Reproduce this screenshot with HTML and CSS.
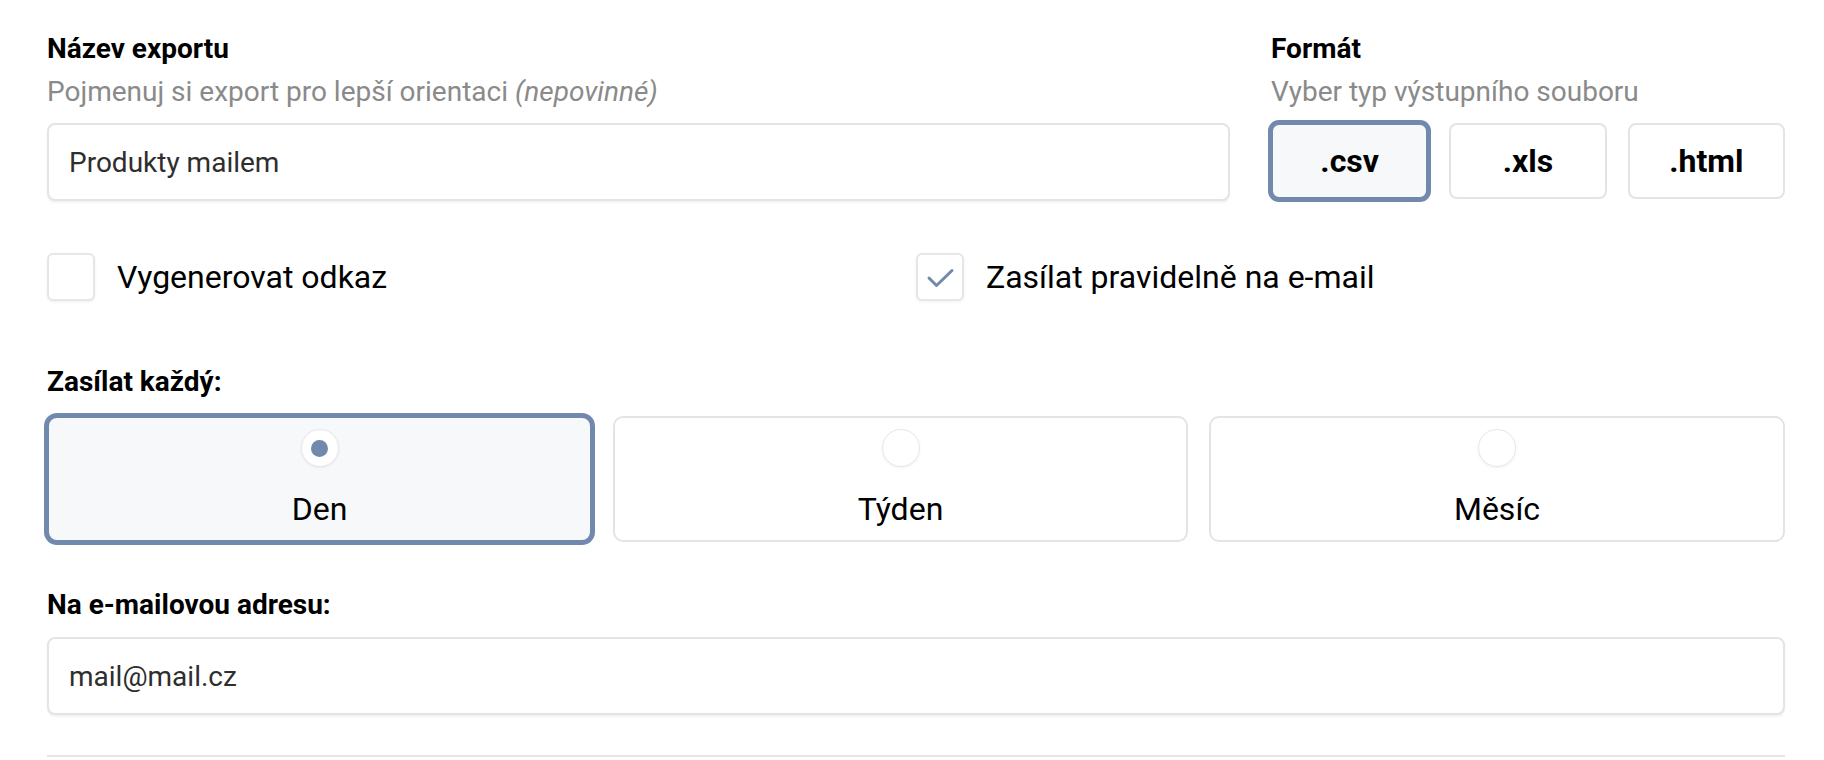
FILE: index.html
```html
<!DOCTYPE html>
<html lang="cs">
<head>
<meta charset="utf-8">
<title>Export</title>
<link rel="stylesheet" href="styles.css">
</head>
<body>
<div class="page">
  <div class="top-row">
    <div class="field">
      <div class="label">Název exportu</div>
      <div class="hint">Pojmenuj si export pro lepší orientaci <em>(nepovinné)</em></div>
      <div class="input">Produkty mailem</div>
    </div>
    <div class="field">
      <div class="label">Formát</div>
      <div class="hint">Vyber typ výstupního souboru</div>
      <div class="formats">
        <div class="format active">.csv</div>
        <div class="format">.xls</div>
        <div class="format">.html</div>
      </div>
    </div>
  </div>

  <div class="checks">
    <div class="check">
      <span class="box"></span>
      <span class="check-label">Vygenerovat odkaz</span>
    </div>
    <div class="check">
      <span class="box">
        <svg class="tick" viewBox="0 0 48 48" width="48" height="48"><path d="M13 25 L20.5 32.5 L36 17.5" fill="none" stroke="#7189ad" stroke-width="3" stroke-linecap="round" stroke-linejoin="round"/></svg>
      </span>
      <span class="check-label">Zasílat pravidelně na e-mail</span>
    </div>
  </div>

  <div class="section">
    <div class="label">Zasílat každý:</div>
    <div class="periods">
      <div class="period active"><span class="radio"><span class="dot"></span></span><span class="period-label">Den</span></div>
      <div class="period"><span class="radio"></span><span class="period-label">Týden</span></div>
      <div class="period"><span class="radio"></span><span class="period-label">Měsíc</span></div>
    </div>
  </div>

  <div class="section email">
    <div class="label">Na e-mailovou adresu:</div>
    <div class="input">mail@mail.cz</div>
  </div>

  <div class="divider"></div>
</div>
</body>
</html>
```
FILE: styles.css
```css
* { box-sizing: border-box; }

html, body {
  margin: 0;
  padding: 0;
  background: #ffffff;
}

body {
  font-family: Roboto, "Liberation Sans", Arial, sans-serif;
  color: #000;
}

.page {
  padding: 31px 39px 0 47px;
}

.top-row {
  display: grid;
  grid-template-columns: 1183px 514px;
  column-gap: 41px;
  align-items: start;
}

.label {
  font-size: 28px;
  font-weight: 700;
  line-height: 36px;
  color: #000;
  margin-bottom: 7px;
}

.hint {
  font-size: 28px;
  line-height: 36px;
  color: #8a8a8a;
  margin-bottom: 13px;
}

.hint em {
  font-style: italic;
}

.input {
  height: 78px;
  border: 2px solid #e4e4e4;
  border-radius: 8px;
  box-shadow: 0 2px 2px rgba(0, 0, 0, 0.05);
  display: flex;
  align-items: center;
  padding: 0 20px;
  font-size: 28px;
  color: #2e2e2e;
  background: #fff;
}

.formats {
  display: grid;
  grid-template-columns: repeat(3, 1fr);
  column-gap: 21px;
}

.format {
  height: 76px;
  border: 2px solid #e4e4e4;
  border-radius: 8px;
  display: flex;
  align-items: center;
  justify-content: center;
  font-size: 32px;
  font-weight: 700;
  color: #000;
  background: #fff;
}

.format.active {
  border-color: #7189ad;
  box-shadow: 0 0 0 3px #7189ad;
  background: #f6f8fa;
}

.checks {
  display: grid;
  grid-template-columns: 1fr 1fr;
  margin-top: 52px;
}

.check {
  display: flex;
  align-items: center;
  gap: 22px;
}

.box {
  width: 48px;
  height: 48px;
  border: 2px solid #e6e6e6;
  border-radius: 6px;
  box-shadow: 0 1px 3px rgba(0, 0, 0, 0.06);
  background: #fff;
  position: relative;
  flex: none;
}

.tick {
  position: absolute;
  left: -2px;
  top: -2px;
}

.check-label {
  font-size: 32px;
  line-height: 40px;
  color: #000;
}

.section {
  margin-top: 63px;
}

.section .label {
  margin-bottom: 16px;
}

.periods {
  display: grid;
  grid-template-columns: 545px 575px 1fr;
  column-gap: 21px;
}

.period {
  border: 2px solid #e4e4e4;
  border-radius: 10px;
  background: #fff;
  padding: 11px 0;
  display: flex;
  flex-direction: column;
  align-items: center;
  gap: 22px;
}

.period.active {
  border-color: #7189ad;
  box-shadow: 0 0 0 3px #7189ad;
  background: #f6f8fa;
}

.radio {
  width: 38px;
  height: 38px;
  border-radius: 50%;
  border: 1.5px solid #e8e8e8;
  background: #fff;
  box-shadow: 0 1px 3px rgba(0, 0, 0, 0.06);
  display: flex;
  align-items: center;
  justify-content: center;
}

.dot {
  width: 17px;
  height: 17px;
  border-radius: 50%;
  background: #7189ad;
}

.period-label {
  font-size: 32px;
  line-height: 40px;
  color: #000;
}

.section.email {
  margin-top: 45px;
}

.section.email .label {
  margin-bottom: 14px;
}

.divider {
  margin-top: 40px;
  border-top: 2px solid #e6e6e6;
}
```
